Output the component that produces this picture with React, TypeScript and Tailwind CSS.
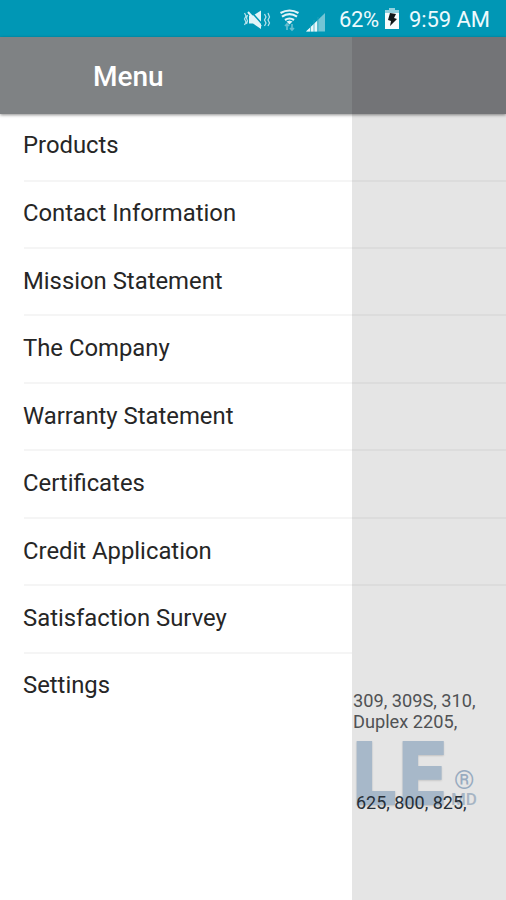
const items = [
  'Products',
  'Contact Information',
  'Mission Statement',
  'The Company',
  'Warranty Statement',
  'Certificates',
  'Credit Application',
  'Satisfaction Survey',
  'Settings',
];

function StatusIcons() {
  return (
    <svg width="84" height="28" viewBox="0 0 84 28" fill="none" className="shrink-0">
      {/* muted speaker with vibration marks */}
      <path d="M6 10.500h4l8-5v18.500l-8-5.500H6z" fill="#e2f4f8" />
      <path d="M7 5.500 20 20" stroke="#0097b5" strokeWidth="1.500" />
      <path d="M5 7 18 21.500" stroke="#e2f4f8" strokeWidth="2" />
      <path d="m1.500 8 1.500 3-1.500 3 1.500 3-1.500 3M4.500 10l-1 3 1 3-1 3M21.500 9l1.500 3-1.500 3 1.500 3-1.500 3M25 8l1.500 4-1.500 3 1.500 3-1.500 3" stroke="#b9e3ec" strokeWidth="1.200" />
      {/* wifi with data arrows */}
      <path d="M37.500 8q9-5 18 0M39 11.700q7.500-5 15 0M42 15q4.500-3 9 0" stroke="#e2f4f8" strokeWidth="2.200" />
      <path d="m43.500 16.500 3 3 3-3-3-1z" fill="#e2f4f8" />
      <path d="M44 25v-6m-2 2 2-2 2 2M49 19v6m-2-2 2 2 2-2" stroke="#66bed0" strokeWidth="1.700" />
      {/* cell signal */}
      <path d="M63 26.500 82 8v18.500z" fill="#73c5d5" />
      <path d="M63 26.500 74 16V26.500z" fill="#e8f7fa" />
      <path d="M67.500 19v8M71 15v12M75 12v15" stroke="#27a6bf" strokeWidth=".7" />
    </svg>
  );
}

function Battery() {
  return (
    <svg width="16" height="23" viewBox="0 0 16 23">
      <path d="M5 1h6v2h4v19H1V3h4z" fill="#f7fcfd" />
      <path d="M5 1h6v2H5zM1 3h14v3H1z" fill="#94d1de" />
      <path d="m6 6 6 1-2 4 3 1-7 7 1-5-3-1z" fill="#101719" />
    </svg>
  );
}

export default function App() {
  return (
    <div className="relative flex h-[900px] w-[506px] flex-col overflow-hidden bg-white font-['Roboto',sans-serif]">
      <div className="flex h-[37px] shrink-0 items-center bg-[#0097b5] pl-[243px] text-[22px] text-[#edfafd]">
        <StatusIcons />
        <span className="ml-[12px] w-[42px] whitespace-nowrap pt-[2px] tracking-[-0.4px]">62%</span>
        <span className="ml-[3px]"><Battery /></span>
        <span className="ml-[9px] whitespace-nowrap pt-[2px] tracking-[-0.1px]">9:59 AM</span>
      </div>
      <header className="relative z-10 flex h-[77px] shrink-0 bg-[#737477] shadow-[0_1px_3px_rgba(0,0,0,0.45)]">
        <div className="flex w-[352px] items-center bg-[#7f8284] pl-[93px] pt-[3px] text-[28px] font-medium text-white">
          <span>Menu</span>
        </div>
      </header>
      <main className="flex flex-1">
        <nav className="w-[352px] bg-white">
          {items.map((item, i) => (
            <div key={item} className={`ml-6 flex items-center text-[23.85px] text-[#262626] ${i === 0 ? 'h-[67.5px] pb-[1px]' : 'h-[67.45px]'} ${i < 8 ? 'border-b-2 border-[#f5f5f5]' : 'pb-[2px]'}`}>
              <span className="-ml-px">{item}</span>
            </div>
          ))}
        </nav>
        <aside className="relative flex-1 bg-[#e5e5e5]">
          {items.slice(0, 7).map((item, i) => (
            <div key={item} className={`border-b-2 border-[#dcdcdc] ${i === 0 ? 'h-[67.5px]' : 'h-[67.45px]'}`} />
          ))}
          <div className="absolute left-px top-[576px] whitespace-nowrap text-[18.2px] leading-[21px] text-[#505254]">
            <div>309, 309S, 310,</div>
            <div>Duplex 2205,</div>
          </div>
          <div className="absolute left-[1px] top-[614px] origin-left text-[88px] leading-[90px] font-black tracking-[2px] text-[#a7b8c9] [font-family:Inter,sans-serif] [text-shadow:0_1px_2px_rgba(0,0,0,0.15)] scale-x-[0.89]">LE</div>
          <div className="absolute left-[102px] top-[653px] text-[26px] leading-[26px] text-[#98abc0]">®</div>
          <div className="absolute left-[99px] top-[676px] text-[17px] leading-[18px] font-medium text-[#a7b5c4]">MD</div>
          <div className="absolute left-[4px] top-[678px] whitespace-nowrap text-[18px] leading-[21px] text-[#283038]">625, 800, 825,</div>
        </aside>
      </main>
    </div>
  );
}
